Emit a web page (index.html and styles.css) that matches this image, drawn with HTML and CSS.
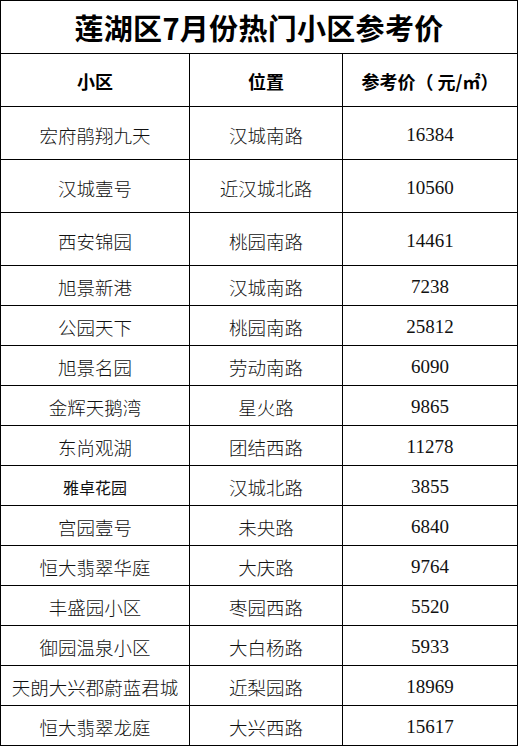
FILE: index.html
```html
<!DOCTYPE html>
<html lang="zh-CN">
<head>
<meta charset="utf-8">
<title>莲湖区7月份热门小区参考价</title>
<link rel="stylesheet" href="styles.css">
</head>
<body>
<div class="sheet">
  <div class="cell title">莲湖区7月份热门小区参考价</div>
  <div class="cell head">小区</div>
  <div class="cell head">位置</div>
  <div class="cell head">参考价（ 元/㎡）</div>

  <div class="cell tall">宏府鹃翔九天</div><div class="cell tall">汉城南路</div><div class="cell tall num">16384</div>
  <div class="cell tall">汉城壹号</div><div class="cell tall">近汉城北路</div><div class="cell tall num">10560</div>
  <div class="cell tall">西安锦园</div><div class="cell tall">桃园南路</div><div class="cell tall num">14461</div>

  <div class="cell">旭景新港</div><div class="cell">汉城南路</div><div class="cell num">7238</div>
  <div class="cell">公园天下</div><div class="cell">桃园南路</div><div class="cell num">25812</div>
  <div class="cell">旭景名园</div><div class="cell">劳动南路</div><div class="cell num">6090</div>
  <div class="cell">金辉天鹅湾</div><div class="cell">星火路</div><div class="cell num">9865</div>
  <div class="cell">东尚观湖</div><div class="cell">团结西路</div><div class="cell num">11278</div>
  <div class="cell small">雅卓花园</div><div class="cell">汉城北路</div><div class="cell num">3855</div>
  <div class="cell">宫园壹号</div><div class="cell">未央路</div><div class="cell num">6840</div>
  <div class="cell">恒大翡翠华庭</div><div class="cell">大庆路</div><div class="cell num">9764</div>
  <div class="cell">丰盛园小区</div><div class="cell">枣园西路</div><div class="cell num">5520</div>
  <div class="cell">御园温泉小区</div><div class="cell">大白杨路</div><div class="cell num">5933</div>
  <div class="cell">天朗大兴郡蔚蓝君城</div><div class="cell">近梨园路</div><div class="cell num">18969</div>
  <div class="cell">恒大翡翠龙庭</div><div class="cell">大兴西路</div><div class="cell num">15617</div>
</div>
</body>
</html>
```

FILE: styles.css
```css
html, body {
  margin: 0;
  padding: 0;
  background: #ffffff;
}

.sheet {
  display: grid;
  grid-template-columns: 189px 153px 175px;
  grid-template-rows: repeat(5, 53px);
  grid-auto-rows: 40px;
  width: 517px;
  border-left: 1px solid #000;
  border-top: 1px solid #000;
  font-family: "Noto Sans CJK SC", "Noto Sans", sans-serif;
}

.cell {
  box-sizing: border-box;
  border-right: 1px solid #000;
  border-bottom: 1px solid #000;
  display: flex;
  align-items: center;
  justify-content: center;
  padding-top: 2px;
  font-size: 18.5px;
  font-weight: 300;
  color: #111;
  white-space: nowrap;
}

.cell.title {
  grid-column: 1 / 4;
  font-size: 29px;
  font-weight: 700;
  color: #000;
  letter-spacing: 0.3px;
  padding-top: 0;
}

.cell.head {
  font-size: 18px;
  font-weight: 700;
  color: #000;
}

.cell.tall {
  padding-top: 4px;
}

.cell.num {
  font-family: "Liberation Serif", "DejaVu Serif", serif;
  font-size: 19px;
  font-weight: 400;
}

.cell.small {
  font-size: 16px;
  font-weight: 400;
}
```
